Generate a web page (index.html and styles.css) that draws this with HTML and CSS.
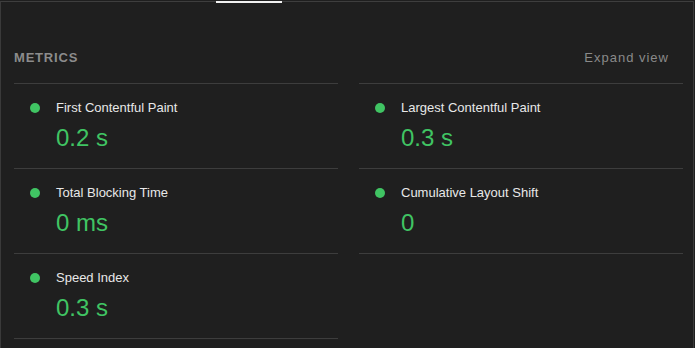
FILE: index.html
```html
<!DOCTYPE html>
<html lang="en">
<head>
    <meta charset="UTF-8">
    <meta name="viewport" content="width=device-width, initial-scale=1.0">
    <title>Metrics</title>
    <link rel="stylesheet" href="styles.css">
</head>
<body>
    <div class="panel">
        <div class="tab-indicator"></div>
        <div class="metrics-header">
            <span class="metrics-title">Metrics</span>
            <a href="#" class="expand-link">Expand view</a>
        </div>
        <div class="metrics-grid">
            <div class="metrics-col">
                <div class="metric">
                    <span class="dot"></span>
                    <div class="metric-text">
                        <div class="metric-label">First Contentful Paint</div>
                        <div class="metric-value">0.2&nbsp;s</div>
                    </div>
                </div>
                <div class="metric">
                    <span class="dot"></span>
                    <div class="metric-text">
                        <div class="metric-label">Total Blocking Time</div>
                        <div class="metric-value">0&nbsp;ms</div>
                    </div>
                </div>
                <div class="metric">
                    <span class="dot"></span>
                    <div class="metric-text">
                        <div class="metric-label">Speed Index</div>
                        <div class="metric-value">0.3&nbsp;s</div>
                    </div>
                </div>
            </div>
            <div class="metrics-col">
                <div class="metric">
                    <span class="dot"></span>
                    <div class="metric-text">
                        <div class="metric-label">Largest Contentful Paint</div>
                        <div class="metric-value">0.3&nbsp;s</div>
                    </div>
                </div>
                <div class="metric">
                    <span class="dot"></span>
                    <div class="metric-text">
                        <div class="metric-label">Cumulative Layout Shift</div>
                        <div class="metric-value">0</div>
                    </div>
                </div>
            </div>
        </div>
    </div>
</body>
</html>
```

FILE: styles.css
```css
* {
    margin: 0;
    padding: 0;
    box-sizing: border-box;
}
html, body {
    background: #1f1f1f;
}
body {
    font-family: 'Liberation Sans', Arial, sans-serif;
    width: 695px;
    height: 348px;
    overflow: hidden;
}
.panel {
    margin-top: 1px;
    width: 694px;
    height: 347px;
    border-top: 1px solid #3e3e3e;
    border-left: 1px solid #3a3a3a;
    border-right: 1px solid #3a3a3a;
    padding: 0 10px 0 13px;
}
.tab-indicator {
    width: 66px;
    height: 2px;
    margin: -1px 0 0 202px;
    background: #f1f1f1;
}
.metrics-header {
    display: flex;
    justify-content: space-between;
    align-items: center;
    padding: 47px 14px 17px 0;
    line-height: 16px;
}
.metrics-title {
    font-size: 13px;
    font-weight: bold;
    text-transform: uppercase;
    letter-spacing: 0.8px;
    color: #8c8c8c;
}
.expand-link {
    font-size: 13px;
    letter-spacing: 1px;
    color: #8a8a8a;
    text-decoration: none;
}
.metrics-grid {
    display: grid;
    grid-template-columns: 324px 324px;
    column-gap: 21px;
}
.metrics-col {
    border-top: 1px solid #3d3d3d;
}
.metric {
    display: flex;
    align-items: flex-start;
    gap: 16px;
    padding: 16px 0 17px 16px;
    border-bottom: 1px solid #3d3d3d;
}
.dot {
    flex: none;
    width: 10px;
    height: 10px;
    margin-top: 3px;
    border-radius: 50%;
    background: #40c463;
}
.metric-label {
    font-size: 13px;
    line-height: 16px;
    color: #e8e8e8;
}
.metric-value {
    margin-top: 9px;
    font-size: 24px;
    line-height: 26px;
    color: #40c463;
}
```
